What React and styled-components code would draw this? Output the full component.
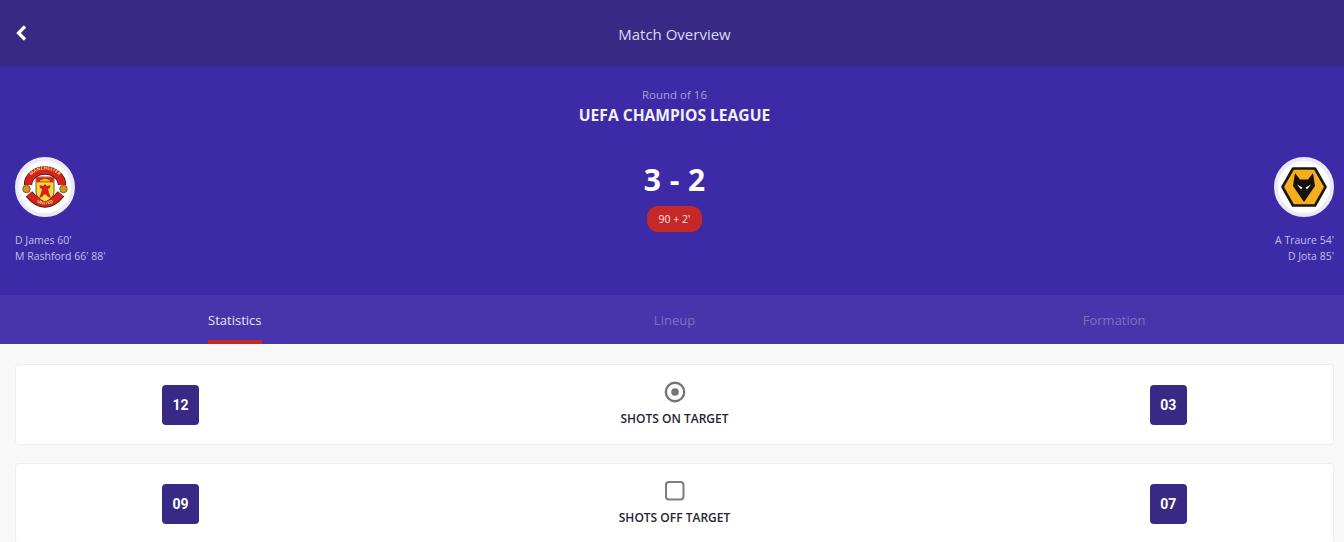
import React from "react";
import styled, { createGlobalStyle } from "styled-components";

const GlobalStyle = createGlobalStyle`
  html, body {
    margin: 0;
    height: 100%;
    overflow: hidden;
    background: #f8f8f8;
    font-family: "Open Sans", "Noto Sans", sans-serif;
  }
  * { box-sizing: border-box; }
`;

// Top bar
const TopBar = styled.header`
  height: 66px;
  background: #372984;
  display: grid;
  grid-template-columns: 1fr auto 1fr;
  align-items: center;
  padding: 0 10px 0 15px;
`;

const BackButton = styled.button`
  width: 14px;
  height: 18px;
  padding: 0;
  border: 0;
  background: none;
  display: flex;
  align-items: center;
`;

const TopTitle = styled.h1`
  margin: 0;
  padding-top: 2px;
  font-size: 15px;
  font-weight: 400;
  color: #dcd9f0;
`;

// Hero
const Hero = styled.section`
  height: 229px;
  background: #3d2aa6;
  padding: 20px 10px 0 15px;
`;

const Competition = styled.div`
  text-align: center;
`;

const Round = styled.div`
  font-size: 11.5px;
  line-height: 17px;
  color: #a89fdc;
`;

const League = styled.div`
  font-size: 15.6px;
  line-height: 24px;
  font-weight: 700;
  color: #f1f0fa;
`;

const MatchRow = styled.div`
  display: grid;
  grid-template-columns: 1fr auto 1fr;
  margin-top: 30px;
`;

const Team = styled.div`
  display: flex;
  flex-direction: column;
  align-items: ${(p) => (p.$right ? "flex-end" : "flex-start")};
  text-align: ${(p) => (p.$right ? "right" : "left")};
`;

const Crest = styled.div`
  width: 60px;
  height: 60px;
  border-radius: 50%;
  background: #fff;
  border: 4px solid #ebe9f6;
  display: flex;
  align-items: center;
  justify-content: center;
  overflow: hidden;
`;

const Scorers = styled.div`
  margin-top: 15px;
  font-size: 10.5px;
  line-height: 16px;
  color: #c4bee8;
`;

const ScoreBlock = styled.div`
  display: flex;
  flex-direction: column;
  align-items: center;
  padding-top: 3px;
`;

const Score = styled.div`
  font-size: 30px;
  line-height: 40px;
  font-weight: 700;
  color: #fff;
  word-spacing: 1px;
`;

const MinutePill = styled.div`
  margin-top: 6px;
  width: 55px;
  height: 26px;
  border-radius: 11px;
  background: #c62828;
  color: #fbe9e9;
  font-size: 10.5px;
  display: flex;
  align-items: center;
  justify-content: center;
`;

// Tabs
const TabBar = styled.nav`
  height: 49px;
  background: #4935ab;
  padding: 0 10px 0 15px;
  display: grid;
  grid-template-columns: repeat(3, 1fr);
`;

const TabCell = styled.div`
  display: flex;
  justify-content: center;
`;

const Tab = styled.div`
  height: 49px;
  display: flex;
  align-items: center;
  padding: 5px 0 0;
  font-size: 13px;
  color: ${(p) => (p.$active ? "#e6e4f6" : "#7c70c4")};
  border-bottom: 4px solid ${(p) => (p.$active ? "#c62828" : "transparent")};
`;

// Statistics
const StatList = styled.main`
  padding: 20px 10px 0 15px;
  display: flex;
  flex-direction: column;
  gap: 18px;
`;

const StatCard = styled.article`
  height: 81px;
  background: #fff;
  border: 1px solid #eeeeee;
  border-radius: 4px;
  display: grid;
  grid-template-columns: 1fr 2fr 1fr;
  align-items: center;
`;

const StatValueCell = styled.div`
  display: flex;
  justify-content: center;
`;

const StatValue = styled.div`
  width: 37px;
  height: 40px;
  padding-top: 1px;
  border-radius: 4px;
  background: #372984;
  color: #fff;
  font-family: Roboto, sans-serif;
  font-size: 14px;
  font-weight: 700;
  display: flex;
  align-items: center;
  justify-content: center;
`;

const StatCenter = styled.div`
  display: flex;
  flex-direction: column;
  align-items: center;
  gap: 7px;
  padding-bottom: 3px;
`;

const StatLabel = styled.div`
  font-size: 12px;
  line-height: 16px;
  font-weight: 600;
  color: #262433;
`;

const BackIcon = () => (
  <svg width="14" height="18" viewBox="0 0 14 18" fill="none">
    <path d="M10 2.5 L3.5 9 L10 15.5" stroke="#fff" strokeWidth="3.2" />
  </svg>
);

const TargetIcon = () => (
  <svg width="24" height="24" viewBox="0 0 24 24">
    <circle cx="12" cy="12" r="9.2" fill="none" stroke="#757575" strokeWidth="2.4" />
    <circle cx="12" cy="12" r="3.8" fill="#757575" />
  </svg>
);

const SquareIcon = () => (
  <svg width="24" height="24" viewBox="0 0 24 24">
    <rect x="3" y="3" width="17.5" height="17.5" rx="3" fill="none" stroke="#7d7d7d" strokeWidth="2" />
  </svg>
);

const UnitedCrest = () => (
  <svg width="52" height="52" viewBox="0 0 52 52">
    <defs>
      <path id="topArc" d="M8.5 24 A17.5 15.5 0 0 1 43.5 24" />
      <path id="bottomArc" d="M9 34 Q26 53 43 34" />
    </defs>
    {/* top and bottom bands */}
    <path d="M9 24 A17 14.5 0 0 1 43 24" fill="none" stroke="#2a1508" strokeWidth="8.4" />
    <path d="M9 24 A17 14.5 0 0 1 43 24" fill="none" stroke="#d8201e" strokeWidth="7" />
    <path d="M10 33 Q26 52 42 33" fill="none" stroke="#2a1508" strokeWidth="8.4" />
    <path d="M10 33 Q26 52 42 33" fill="none" stroke="#d8201e" strokeWidth="7" />
    <text fontSize="4.6" fontWeight="700" fill="#f6d873" fontFamily="Open Sans, sans-serif">
      <textPath href="#topArc" startOffset="50%" textAnchor="middle">MANCHESTER</textPath>
    </text>
    <text fontSize="4.6" fontWeight="700" fill="#f6d873" fontFamily="Open Sans, sans-serif">
      <textPath href="#bottomArc" startOffset="50%" textAnchor="middle">UNITED</textPath>
    </text>
    {/* side balls */}
    <circle cx="7.5" cy="28" r="3.8" fill="#d0941f" stroke="#4a2a08" strokeWidth="0.6" />
    <circle cx="44.5" cy="28" r="3.8" fill="#d0941f" stroke="#4a2a08" strokeWidth="0.6" />
    {/* shield */}
    <path d="M17 16 H35 V31 Q35 37 26 41 Q17 37 17 31 Z" fill="#f7dc3c" stroke="#2a1508" strokeWidth="0.7" />
    <rect x="17.4" y="16.4" width="17.2" height="5" fill="#d8201e" />
    <path d="M21 19.5 L26 17.5 L31 19.5 V20.5 H21 Z" fill="#f3c316" />
    <path d="M26 23 L28 25 L31.5 24 L31 27 L29 28 L30 32 L32 37 L29 36 L27 33.5 L25 33.5 L23 36 L20 37 L22 32 L23 28 L21 27 L20.5 24 L24 25 Z" fill="#d8201e" />
  </svg>
);

const WolvesCrest = () => (
  <svg width="52" height="52" viewBox="0 0 52 52">
    <path d="M4.5 26 L15 7.5 H37 L47.5 26 L37 44.5 H15 Z" fill="#f7ae1d" stroke="#1b1612" strokeWidth="2.6" strokeLinejoin="round" />
    <path d="M17 12 L22 18.5 H30 L35 12 L37 25 L31.5 33 L26 41 L20.5 33 L15 25 Z" fill="#15110e" />
    <path d="M19 23.5 L24.5 26.5 L23 28.5 Z M33 23.5 L27.5 26.5 L29 28.5 Z" fill="#f3efe8" />
  </svg>
);

const stats = [
  { home: "12", away: "03", label: "SHOTS ON TARGET", icon: <TargetIcon /> },
  { home: "09", away: "07", label: "SHOTS OFF TARGET", icon: <SquareIcon /> },
];

export default function App() {
  return (
    <>
      <GlobalStyle />
      <TopBar>
        <BackButton aria-label="Back">
          <BackIcon />
        </BackButton>
        <TopTitle>Match Overview</TopTitle>
      </TopBar>

      <Hero>
        <Competition>
          <Round>Round of 16</Round>
          <League>UEFA CHAMPIOS LEAGUE</League>
        </Competition>
        <MatchRow>
          <Team>
            <Crest>
              <UnitedCrest />
            </Crest>
            <Scorers>
              D James 60'
              <br />
              M Rashford 66' 88'
            </Scorers>
          </Team>
          <ScoreBlock>
            <Score>3 - 2</Score>
            <MinutePill>90 + 2'</MinutePill>
          </ScoreBlock>
          <Team $right>
            <Crest>
              <WolvesCrest />
            </Crest>
            <Scorers>
              A Traure 54'
              <br />
              D Jota 85'
            </Scorers>
          </Team>
        </MatchRow>
      </Hero>

      <TabBar>
        <TabCell>
          <Tab $active>Statistics</Tab>
        </TabCell>
        <TabCell>
          <Tab>Lineup</Tab>
        </TabCell>
        <TabCell>
          <Tab>Formation</Tab>
        </TabCell>
      </TabBar>

      <StatList>
        {stats.map((s) => (
          <StatCard key={s.label}>
            <StatValueCell>
              <StatValue>{s.home}</StatValue>
            </StatValueCell>
            <StatCenter>
              {s.icon}
              <StatLabel>{s.label}</StatLabel>
            </StatCenter>
            <StatValueCell>
              <StatValue>{s.away}</StatValue>
            </StatValueCell>
          </StatCard>
        ))}
      </StatList>
    </>
  );
}
